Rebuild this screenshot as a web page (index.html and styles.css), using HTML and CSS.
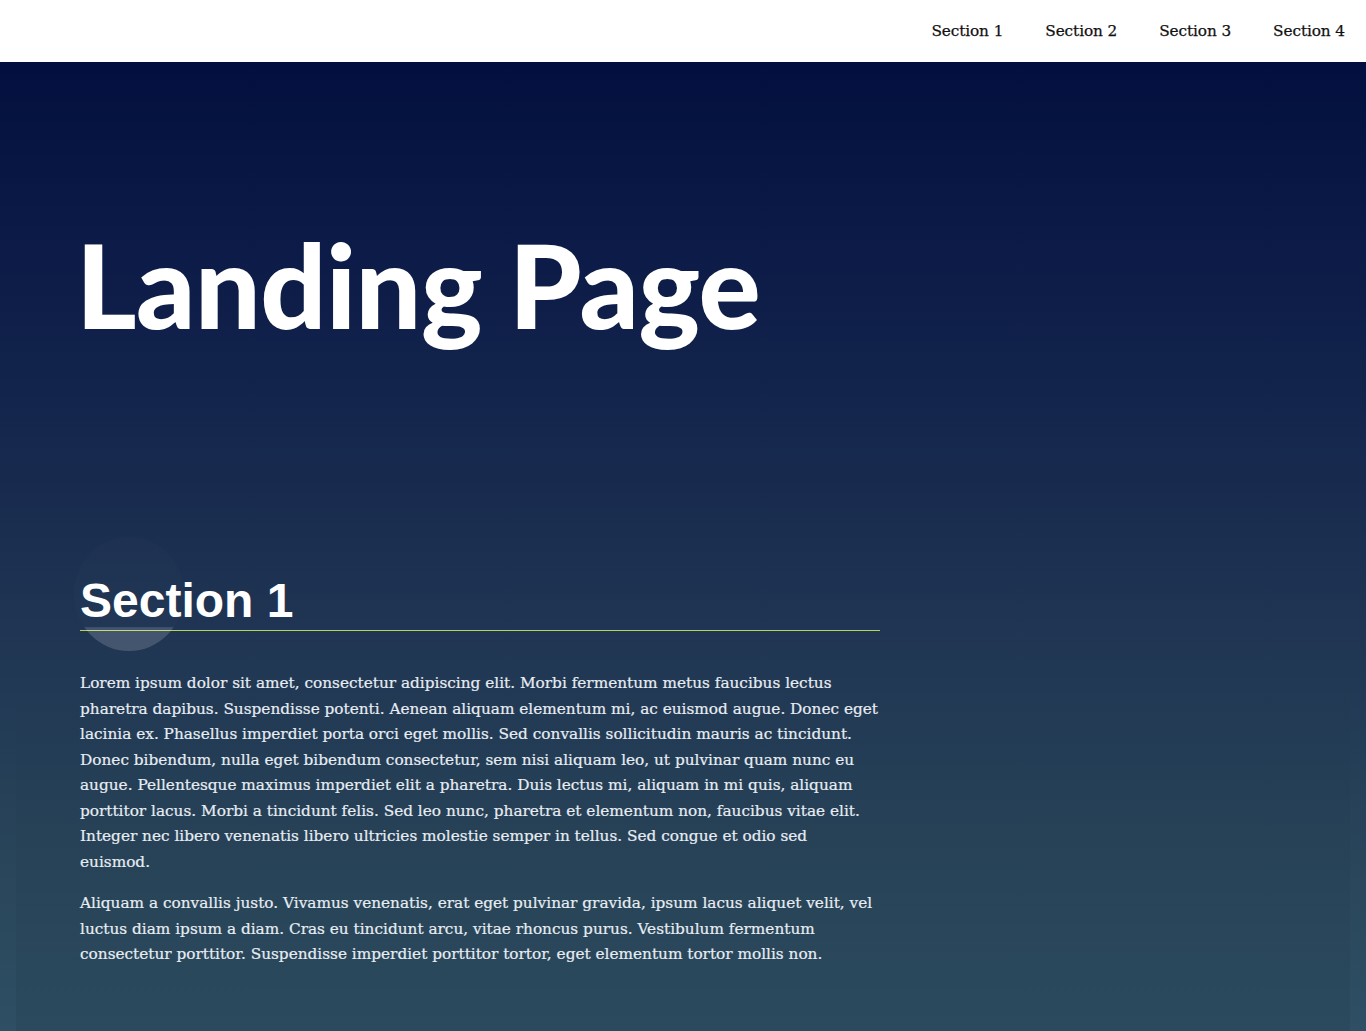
FILE: index.html
```html
<!DOCTYPE html>
<html lang="en">
<head>
<meta charset="utf-8">
<title>Landing Page</title>
<link rel="stylesheet" href="styles.css">
</head>
<body>
<header class="topbar">
  <nav class="nav">
    <a class="nav-link" href="#s1">Section 1</a>
    <a class="nav-link" href="#s2">Section 2</a>
    <a class="nav-link" href="#s3">Section 3</a>
    <a class="nav-link" href="#s4">Section 4</a>
  </nav>
</header>
<main class="main">
  <h1 class="hero-title">Landing Page</h1>
  <section class="section" id="s1">
    <h2 class="section-title"><span class="blob"></span><span class="section-text">Section 1</span></h2>
    <div class="panel">
      <div class="panel-inner">
        <p class="copy">Lorem ipsum dolor sit amet, consectetur adipiscing elit. Morbi fermentum metus faucibus lectus pharetra dapibus. Suspendisse potenti. Aenean aliquam elementum mi, ac euismod augue. Donec eget lacinia ex. Phasellus imperdiet porta orci eget mollis. Sed convallis sollicitudin mauris ac tincidunt. Donec bibendum, nulla eget bibendum consectetur, sem nisi aliquam leo, ut pulvinar quam nunc eu augue. Pellentesque maximus imperdiet elit a pharetra. Duis lectus mi, aliquam in mi quis, aliquam porttitor lacus. Morbi a tincidunt felis. Sed leo nunc, pharetra et elementum non, faucibus vitae elit. Integer nec libero venenatis libero ultricies molestie semper in tellus. Sed congue et odio sed euismod.</p>
        <p class="copy">Aliquam a convallis justo. Vivamus venenatis, erat eget pulvinar gravida, ipsum lacus aliquet velit, vel luctus diam ipsum a diam. Cras eu tincidunt arcu, vitae rhoncus purus. Vestibulum fermentum consectetur porttitor. Suspendisse imperdiet porttitor tortor, eget elementum tortor mollis non.</p>
      </div>
    </div>
  </section>
</main>
</body>
</html>
```

FILE: styles.css
```css
html, body {
  margin: 0;
  padding: 0;
}
body {
  background: #ffffff;
}
.topbar {
  height: 62px;
  background: #ffffff;
  display: flex;
  align-items: center;
  justify-content: flex-end;
}
.nav {
  display: flex;
  padding-right: 0;
}
.nav-link {
  font-family: "DejaVu Serif", serif;
  font-size: 15.3px;
  color: #111111;
  text-decoration: none;
  padding: 0 21px;
  letter-spacing: -0.1px;
  -webkit-text-stroke: 0.25px #111111;
}
.main {
  min-height: 969px;
  box-sizing: border-box;
  display: flex;
  flex-direction: column;
  padding: 0 16px;
  background: linear-gradient(to bottom, #03103f 0%, #0e1e49 25%, #1e3352 55.5%, #2a475b 85%, #2e4f64 100%);
}
.hero-title {
  font-family: Lato, sans-serif;
  font-weight: 900;
  font-size: 116px;
  line-height: 116px;
  letter-spacing: -0.5px;
  color: #ffffff;
  margin: 165px 0 0 60px;
}
.section {
  flex: 1;
  display: flex;
  flex-direction: column;
}
.section-title {
  position: relative;
  width: 800px;
  margin: 234px 0 14px 64px;
  padding-bottom: 5px;
  border-bottom: 1px solid #b9d35a;
  font-family: "Liberation Sans", Arial, sans-serif;
  font-weight: 700;
  font-size: 48px;
  line-height: 48px;
  color: #ffffff;
}
.section-text {
  position: relative;
}
.blob {
  position: absolute;
  left: -6px;
  top: -40px;
  width: 110px;
  height: 114px;
  border-radius: 50%;
  background: linear-gradient(to bottom, rgba(255,255,255,0.012) 0%, rgba(255,255,255,0.012) 79%, rgba(255,255,255,0.16) 79.5%, rgba(255,255,255,0.16) 100%);
}
.panel {
  flex: 1;
  padding: 26px 64px 20px;
  background: linear-gradient(to bottom, rgba(0,8,20,0) 0%, rgba(0,8,20,0.07) 100%);
}
.panel-inner {
  width: 800px;
}
.copy {
  font-family: "DejaVu Serif", serif;
  font-size: 15.3px;
  line-height: 25.5px;
  color: #e8edf3;
  margin: 0 0 16px;
  -webkit-text-stroke: 0.2px #e8edf3;
}
```
